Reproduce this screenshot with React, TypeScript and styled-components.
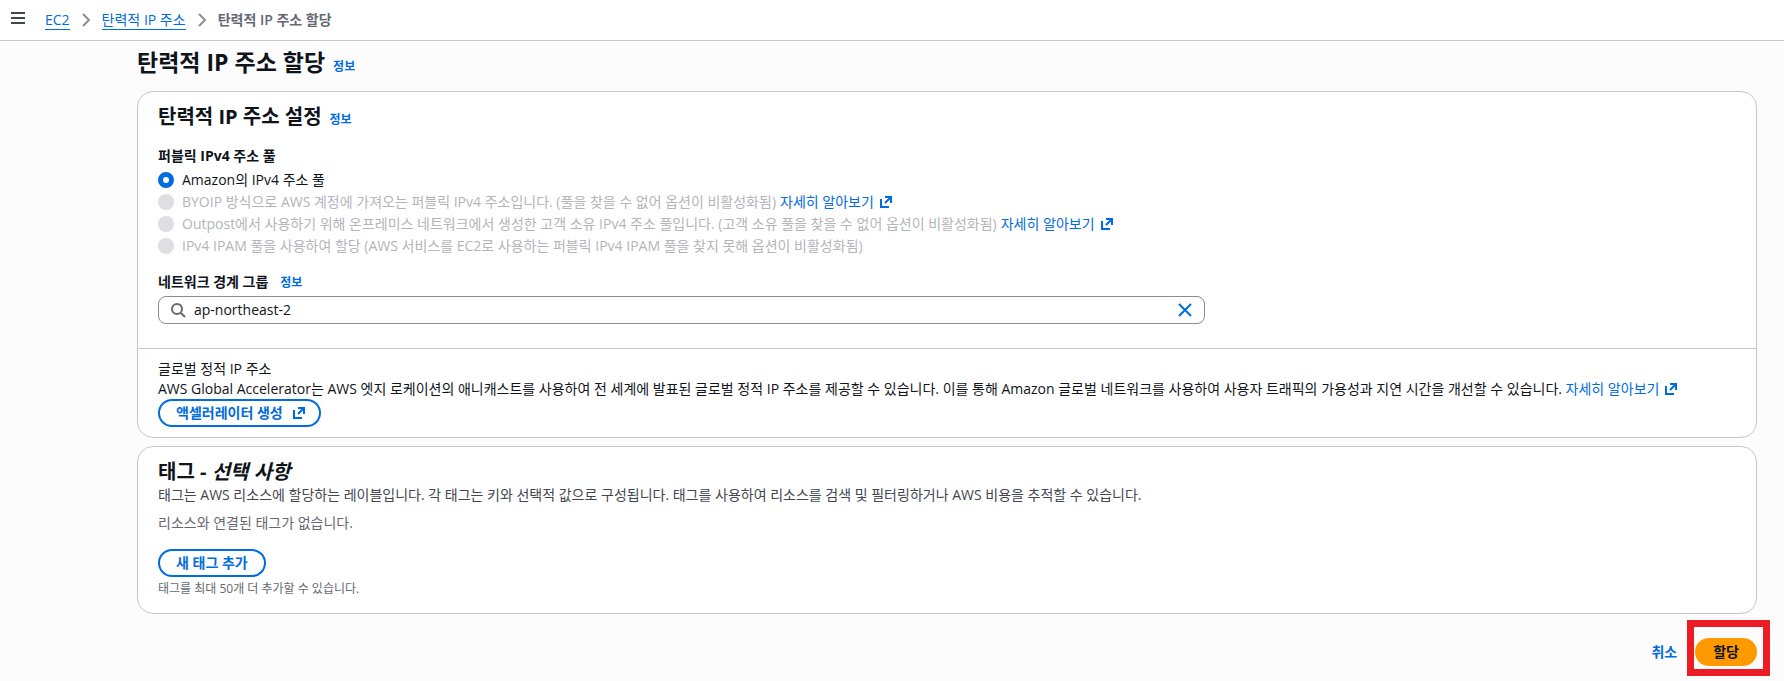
import React from "react";
import styled, { createGlobalStyle, css } from "styled-components";

const color = {
  link: "#006ce0",
  text: "#0f141a",
  secondary: "#424650",
  muted: "#656871",
  disabled: "#b4b4bb",
  line: "#c6c6cd",
  field: "#8c8c94",
};

const GlobalStyle = createGlobalStyle`
  *, *::before, *::after { box-sizing: border-box; }
  body {
    margin: 0;
    background: #fcfcfd;
    color: ${color.text};
    font-family: "Open Sans", "Noto Sans CJK KR", sans-serif;
    font-size: 14px;
    line-height: 20px;
  }
  h1, h2, p, fieldset, legend { margin: 0; padding: 0; border: 0; }
  button, input { font: inherit; color: inherit; margin: 0; }
`;

const TopBar = styled.header`
  display: flex;
  align-items: center;
  gap: 20px;
  height: 41px;
  padding: 0 11px;
  background: #fff;
  border-bottom: 1px solid ${color.line};
`;

const IconButton = styled.button`
  display: inline-flex;
  padding: 0;
  border: 0;
  background: none;
  color: ${(p) => p.color};
  cursor: pointer;
`;

const Crumbs = styled.ol`
  display: flex;
  align-items: center;
  gap: 8px;
  margin: 0;
  padding: 0;
  list-style: none;
`;

const Crumb = styled.li`
  display: flex;
  align-items: center;
  gap: 8px;
  &[aria-current] {
    color: ${color.muted};
    font-weight: 600;
  }
`;

const CrumbLink = styled.a`
  color: ${color.link};
  line-height: 19px;
  text-decoration: none;
  border-bottom: 1px solid currentColor;
`;

const Page = styled.main`
  padding: 6px 27px 0 137px;
`;

const TitleRow = styled.div<{ $gap?: number }>`
  display: flex;
  align-items: baseline;
  gap: ${(p) => p.$gap ?? 8}px;
`;

const PageTitle = styled.h1`
  font-size: 23px;
  line-height: 30px;
  font-weight: 700;
`;

const SectionTitle = styled.h2`
  font-size: 20px;
  line-height: 26px;
  font-weight: 700;
`;

const InfoLink = styled.a`
  color: ${color.link};
  font-size: 12px;
  line-height: 16px;
  font-weight: 700;
  text-decoration: none;
`;

const Cards = styled.div`
  display: flex;
  flex-direction: column;
  gap: 8px;
  margin-top: 14px;
`;

const Card = styled.section`
  background: #fff;
  border: 1px solid ${color.line};
  border-radius: 16px;
`;

const CardPart = styled.div<{ $pad: string }>`
  padding: ${(p) => p.$pad};
  & + & { border-top: 1px solid ${color.line}; }
`;

const Group = styled.fieldset`
  min-width: 0;
  margin-top: 16px;
`;

const labelText = css`
  font-weight: 700;
  line-height: 20px;
`;

const Legend = styled.legend`
  ${labelText}
  margin-bottom: 4px;
`;

const FieldLabel = styled.label`
  ${labelText}
`;

const RadioList = styled.div`
  display: flex;
  flex-direction: column;
  gap: 2px;
`;

const RadioRow = styled.div`
  display: flex;
  align-items: center;
  gap: 8px;
`;

const Radio = styled.input.attrs({ type: "radio" })`
  appearance: none;
  flex: none;
  width: 16px;
  height: 16px;
  border-radius: 50%;
  background: #fff;
  &:checked { border: 5px solid ${color.link}; }
  &:disabled { background: #dedee3; }
`;

const RadioText = styled.label<{ $off?: boolean }>`
  color: ${(p) => (p.$off ? color.disabled : color.text)};
`;

const TextLink = styled.a`
  display: inline-flex;
  align-items: center;
  gap: 4px;
  color: ${color.link};
  text-decoration: none;
`;

const Option = styled.div`
  display: flex;
  gap: 4px;
`;

const Field = styled.div`
  margin-top: 16px;
`;

const FieldGrid = styled.div`
  display: grid;
  grid-template-columns: 2fr 1fr;
  column-gap: 8px;
  margin-top: 4px;
`;

const SearchBox = styled.div`
  display: flex;
  align-items: center;
  gap: 8px;
  height: 28px;
  padding: 0 11px;
  background: #fff;
  border: 1px solid ${color.field};
  border-radius: 8px;
  color: ${color.muted};
`;

const SearchInput = styled.input`
  flex: 1;
  min-width: 0;
  padding: 0;
  border: 0;
  outline: 0;
  background: none;
  color: ${color.text};
`;

const Button = styled.button<{ $kind?: "primary" | "link"; $icon?: boolean }>`
  display: inline-flex;
  align-items: center;
  gap: 8px;
  height: 28px;
  padding: 0 ${(p) => (p.$icon ? 12 : 16)}px 0 16px;
  border: 2px solid ${color.link};
  border-radius: 20px;
  background: #fff;
  color: ${color.link};
  font-weight: 700;
  cursor: pointer;
  ${(p) =>
    p.$kind === "primary" &&
    css`
      border-color: #ff9900;
      background: #ff9900;
      color: ${color.text};
    `}
  ${(p) =>
    p.$kind === "link" &&
    css`
      border-color: transparent;
      background: none;
    `}
`;

const Description = styled.p`
  color: ${color.secondary};
`;

const Empty = styled.p`
  margin: 8px 0 16px;
  color: ${color.muted};
`;

const Hint = styled.p`
  margin-top: 4px;
  color: ${color.muted};
  font-size: 12px;
  line-height: 16px;
`;

const Actions = styled.footer`
  display: flex;
  justify-content: flex-end;
  padding: 24px 0 15px;
`;

const Marked = styled.div`
  position: relative;
  display: flex;
  &::after {
    content: "";
    position: absolute;
    inset: -18px -13px -10px -8px;
    border: 7px solid #ed1c24;
    pointer-events: none;
  }
`;

const ExternalIcon = () => (
  <svg width="16" height="16" viewBox="0 0 16 16" fill="none" stroke="currentColor" strokeWidth="2" aria-hidden="true">
    <path d="M7 3h6v6M13 3L7 9M3 5v8h8" />
  </svg>
);

const MenuIcon = () => (
  <svg width="14" height="16" viewBox="0 0 14 16" fill="none" stroke="currentColor" strokeWidth="2" aria-hidden="true">
    <path d="M0 1h14M0 6h14M0 11h14" />
  </svg>
);

const ChevronIcon = () => (
  <svg width="16" height="16" viewBox="0 0 16 16" fill="none" stroke={color.field} strokeWidth="2" aria-hidden="true">
    <path d="M5 2l6 6-6 6" />
  </svg>
);

const SearchIcon = () => (
  <svg width="16" height="16" viewBox="0 0 16 16" fill="none" stroke="currentColor" strokeWidth="2" aria-hidden="true">
    <circle cx="7" cy="7" r="5" />
    <path d="M11 11l4 4" />
  </svg>
);

const CloseIcon = () => (
  <svg width="16" height="16" viewBox="0 0 16 16" fill="none" stroke="currentColor" strokeWidth="2" aria-hidden="true">
    <path d="M2 2l12 12M14 2L2 14" />
  </svg>
);

const LearnMore = () => (
  <TextLink href="#learn-more">
    자세히 알아보기
    <ExternalIcon />
  </TextLink>
);

const pools = [
  { id: "amazon", text: "Amazon의 IPv4 주소 풀", off: false, more: false },
  {
    id: "byoip",
    text: "BYOIP 방식으로 AWS 계정에 가져오는 퍼블릭 IPv4 주소입니다. (풀을 찾을 수 없어 옵션이 비활성화됨)",
    off: true,
    more: true,
  },
  {
    id: "outpost",
    text: "Outpost에서 사용하기 위해 온프레미스 네트워크에서 생성한 고객 소유 IPv4 주소 풀입니다. (고객 소유 풀을 찾을 수 없어 옵션이 비활성화됨)",
    off: true,
    more: true,
  },
  {
    id: "ipam",
    text: "IPv4 IPAM 풀을 사용하여 할당 (AWS 서비스를 EC2로 사용하는 퍼블릭 IPv4 IPAM 풀을 찾지 못해 옵션이 비활성화됨)",
    off: true,
    more: false,
  },
];

export default function App() {
  return (
    <>
      <GlobalStyle />
      <TopBar>
        <IconButton color={color.secondary} aria-label="메뉴">
          <MenuIcon />
        </IconButton>
        <nav>
          <Crumbs>
            <Crumb>
              <CrumbLink href="#ec2">EC2</CrumbLink>
              <ChevronIcon />
            </Crumb>
            <Crumb>
              <CrumbLink href="#addresses">탄력적 IP 주소</CrumbLink>
              <ChevronIcon />
            </Crumb>
            <Crumb aria-current="page">탄력적 IP 주소 할당</Crumb>
          </Crumbs>
        </nav>
      </TopBar>
      <Page>
        <TitleRow>
          <PageTitle>탄력적 IP 주소 할당</PageTitle>
          <InfoLink href="#info">정보</InfoLink>
        </TitleRow>
        <Cards>
          <Card>
            <CardPart $pad="12px 20px 24px">
              <TitleRow>
                <SectionTitle>탄력적 IP 주소 설정</SectionTitle>
                <InfoLink href="#info-settings">정보</InfoLink>
              </TitleRow>
              <Group>
                <Legend>퍼블릭 IPv4 주소 풀</Legend>
                <RadioList>
                  {pools.map((p) => (
                    <RadioRow key={p.id}>
                      <Radio id={p.id} name="pool" disabled={p.off} defaultChecked={!p.off} />
                      <Option>
                        <RadioText htmlFor={p.id} $off={p.off}>
                          {p.text}
                        </RadioText>
                        {p.more && <LearnMore />}
                      </Option>
                    </RadioRow>
                  ))}
                </RadioList>
              </Group>
              <Field>
                <TitleRow $gap={12}>
                  <FieldLabel htmlFor="group">네트워크 경계 그룹</FieldLabel>
                  <InfoLink href="#info-group">정보</InfoLink>
                </TitleRow>
                <FieldGrid>
                  <SearchBox>
                    <SearchIcon />
                    <SearchInput id="group" defaultValue="ap-northeast-2" />
                    <IconButton color={color.link} aria-label="지우기">
                      <CloseIcon />
                    </IconButton>
                  </SearchBox>
                </FieldGrid>
              </Field>
            </CardPart>
            <CardPart $pad="10px 20px">
              <p>글로벌 정적 IP 주소</p>
              <p>
                AWS Global Accelerator는 AWS 엣지 로케이션의 애니캐스트를 사용하여 전 세계에 발표된 글로벌 정적 IP 주소를 제공할 수 있습니다. 이를 통해 Amazon 글로벌 네트워크를 사용하여 사용자 트래픽의 가용성과 지연 시간을 개선할 수 있습니다.{" "}
                <LearnMore />
              </p>
              <Button $icon>
                액셀러레이터 생성
                <ExternalIcon />
              </Button>
            </CardPart>
          </Card>
          <Card>
            <CardPart $pad="12px 20px 16px">
              <SectionTitle>
                태그 - <i>선택 사항</i>
              </SectionTitle>
              <Description>
                태그는 AWS 리소스에 할당하는 레이블입니다. 각 태그는 키와 선택적 값으로 구성됩니다. 태그를 사용하여 리소스를 검색 및 필터링하거나 AWS 비용을 추적할 수 있습니다.
              </Description>
              <Empty>리소스와 연결된 태그가 없습니다.</Empty>
              <Button>새 태그 추가</Button>
              <Hint>태그를 최대 50개 더 추가할 수 있습니다.</Hint>
            </CardPart>
          </Card>
        </Cards>
        <Actions>
          <Button $kind="link">취소</Button>
          <Marked>
            <Button $kind="primary">할당</Button>
          </Marked>
        </Actions>
      </Page>
    </>
  );
}
